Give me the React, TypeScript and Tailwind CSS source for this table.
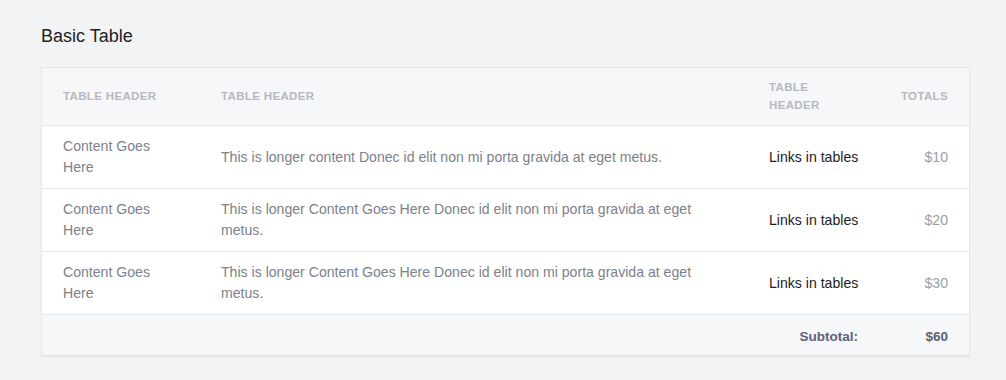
import React from "react";

const rows = [
  {
    a: "Content Goes Here",
    b: "This is longer content Donec id elit non mi porta gravida at eget metus.",
    c: "Links in tables",
    d: "$10",
  },
  {
    a: "Content Goes Here",
    b: "This is longer Content Goes Here Donec id elit non mi porta gravida at eget metus.",
    c: "Links in tables",
    d: "$20",
  },
  {
    a: "Content Goes Here",
    b: "This is longer Content Goes Here Donec id elit non mi porta gravida at eget metus.",
    c: "Links in tables",
    d: "$30",
  },
];

export default function App() {
  return (
    <div
      className="min-h-[380px] w-full bg-[#f2f3f5] pl-[41px] pr-[36px] pt-[25px]"
      style={{ fontFamily: '"Liberation Sans", Arial, sans-serif' }}
    >
      <h2 className="text-[18px] leading-[22px] text-[#222]">Basic Table</h2>
      <div className="mt-[20px] w-[929px] border border-[#e3e6ea] bg-white shadow-[0_1px_1px_#e3e5e8]">
        <table className="w-full table-fixed border-collapse text-[14.1px] leading-[21px]">
          <colgroup>
            <col className="w-[158px]" />
            <col className="w-[548px]" />
            <col className="w-[131px]" />
            <col className="w-[90px]" />
          </colgroup>
          <thead>
            <tr className="h-[57px] bg-[#f6f7f9] border-b border-[#e3e6ea] text-[11.5px] leading-[18px] font-bold uppercase text-[#b5b9c2] tracking-[0.35px]">
              <th className="px-[21px] text-left font-bold">Table Header</th>
              <th className="px-[21px] text-left font-bold">Table Header</th>
              <th className="px-[21px] text-left font-bold">Table Header</th>
              <th className="px-[21px] text-right font-bold">Totals</th>
            </tr>
          </thead>
          <tbody>
            {rows.map((r, i) => (
              <tr key={i} className="h-[63px] border-b border-[#e3e6ea]">
                <td className="px-[21px] pt-[1px] align-middle text-[#7d818a]">{r.a}</td>
                <td className="px-[21px] pt-[1px] align-middle text-[#7d818a]">{r.b}</td>
                <td className="px-[21px] pt-[1px] align-middle whitespace-nowrap text-[#1b1c1e]">{r.c}</td>
                <td className="px-[21px] pt-[1px] align-middle text-right text-[#9a9ea6]">{r.d}</td>
              </tr>
            ))}
          </tbody>
          <tfoot>
            <tr className="h-[41px] bg-[#f6f7f9] font-bold text-[13.5px] text-[#5a6275]">
              <td />
              <td />
              <td className="px-[21px] pt-[3px] text-right whitespace-nowrap">Subtotal:</td>
              <td className="px-[21px] pt-[3px] text-right">$60</td>
            </tr>
          </tfoot>
        </table>
      </div>
    </div>
  );
}
